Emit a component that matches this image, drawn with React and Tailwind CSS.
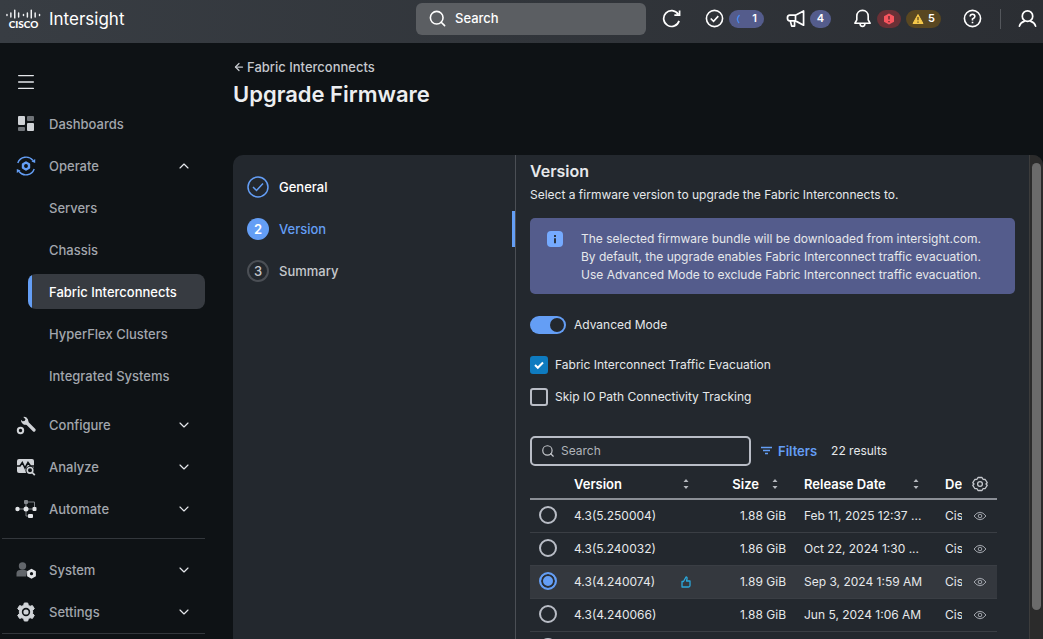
import React from 'react';
import { ArrowLeft, ChevronDown, ChevronUp, Menu, Search } from 'lucide-react';

const releases = [
  { version: '4.3(5.250004)', size: '1.88 GiB', date: 'Feb 11, 2025 12:37 ...' },
  { version: '4.3(5.240032)', size: '1.86 GiB', date: 'Oct 22, 2024 1:30 ...' },
  { version: '4.3(4.240074)', size: '1.89 GiB', date: 'Sep 3, 2024 1:59 AM', recommended: true },
  { version: '4.3(4.240066)', size: '1.88 GiB', date: 'Jun 5, 2024 1:06 AM' },
  { version: '4.3(4.240028)', size: '1.88 GiB', date: 'Apr 9, 2024 2:14 AM' },
];

const operateLinks = [
  'Servers',
  'Chassis',
  'Fabric Interconnects',
  'HyperFlex Clusters',
  'Integrated Systems',
];

const DashboardsIcon = () => (
  <svg viewBox="0 0 18 18" className="w-[18px] h-[18px]">
    <rect x="1" y="1" width="7" height="9" rx="1" fill="#d0d3d7" />
    <rect x="10" y="1" width="7" height="5" rx="1" fill="#6f7378" />
    <rect x="1" y="12" width="7" height="4" rx="1" fill="#6f7378" />
    <rect x="10" y="8" width="7" height="8" rx="1" fill="#d0d3d7" />
  </svg>
);

const OperateIcon = () => (
  <svg viewBox="0 0 20 20" className="w-5 h-5" fill="none" stroke="#649ef5">
    <path d="M1.800 7A8.800 8.800 0 0 1 17 4.500M18.200 13A8.800 8.800 0 0 1 3 15.500" strokeWidth="1.400" />
    <path d="M15.500 5.500 19.200 3v4zM4.500 14.500.8 17v-4z" fill="#649ef5" stroke="none" />
    <path d="M10 6.500 13 8.200v3.600L10 13.500 7 11.800V8.200z" strokeWidth="2.400" strokeLinejoin="round" />
  </svg>
);

const ConfigureIcon = () => (
  <svg viewBox="0 0 20 20" className="w-5 h-5" fill="none" stroke="#d0d3d7">
    <path d="M10.500 7.500 18 15" strokeWidth="3.200" strokeLinecap="round" />
    <path d="M7.300 1.900 9.500 4.200 8.600 6 6.500 6.200 4.900 4.800A4.600 4.600 0 0 0 11.500 9.300 4.600 4.600 0 0 0 7.300 1.900z" fill="#d0d3d7" stroke="none" />
    <circle cx="4.500" cy="15.500" r="2.700" strokeWidth="2" />
  </svg>
);

const AnalyzeIcon = () => (
  <svg viewBox="0 0 20 20" className="w-5 h-5" fill="none">
    <rect x="1" y="2" width="17" height="14" rx="2" fill="#d0d3d7" />
    <path d="M1 9h3l2.300-3.500L9 11l3-5.500L14.500 9H18" stroke="#0e1215" strokeWidth="1.600" />
    <circle cx="14" cy="13.500" r="4.600" fill="#0e1215" />
    <circle cx="14" cy="13.300" r="2.800" stroke="#d0d3d7" strokeWidth="1.600" />
    <path d="m16.200 15.500 2.600 2.700" stroke="#d0d3d7" strokeWidth="1.800" />
  </svg>
);

const AutomateIcon = () => (
  <svg viewBox="0 0 22 20" className="w-[22px] h-5" fill="#e3e5e8">
    <path d="M2 10h18M11 3h8.500v7M11 3v14h4" fill="none" stroke="#7d8186" />
    <circle cx="2.500" cy="10" r="2.200" />
    <circle cx="11" cy="10" r="2.500" />
    <rect x="17.500" y="8" width="4" height="4" rx="1" />
    <rect x="13" y="15" width="5" height="4" rx="1" />
    <rect x="9" y="1" width="4" height="4" rx="1" fill="#85898e" />
  </svg>
);

const SystemIcon = () => (
  <svg viewBox="0 0 20 20" className="w-5 h-5">
    <circle cx="6.500" cy="6" r="3.700" fill="#62666b" />
    <path d="M.5 16.500v-3q0-3.500 3.500-3.500h5l2.500 1-1.500 5.500z" fill="#62666b" />
    <path d="m15.500 8.700 4.400 2.500v5l-4.400 2.500-4.400-2.500v-5z" fill="#e3e5e8" />
    <circle cx="15.500" cy="13.700" r="1.600" fill="#0e1215" />
  </svg>
);

const SettingsIcon = () => (
  <svg viewBox="0 0 20 20" className="w-5 h-5">
    <path d="M8.300 1h3.400l.6 2.300 1.800 1 2.300-.7 1.900 3-1.700 1.800v3.200l1.700 1.800-1.900 3-2.300-.7-1.800 1-.6 2.300H8.300l-.6-2.300-1.800-1-2.300.7-1.900-3 1.700-1.800V8.400L1.700 6.600l1.900-3 2.300.7 1.800-1z" fill="#d0d3d7" stroke="#d0d3d7" strokeLinejoin="round" />
    <circle cx="10" cy="10" r="3.400" fill="none" stroke="#0e1215" strokeWidth="1.600" />
  </svg>
);

const Chevron = ({ open }) => {
  const Icon = open ? ChevronUp : ChevronDown;
  return <Icon className="w-4 h-4 text-gray-200" strokeWidth={1.75} />;
};

const MainItem = ({ icon, label, open, leaf }) => (
  <button type="button" aria-expanded={leaf ? undefined : Boolean(open)} className="flex w-full h-[42px] items-center pl-[15px] pr-[13px] text-left">
    <span className="flex w-[22px] justify-center">{icon}</span>
    <span className="flex-1 pl-3">{label}</span>
    {!leaf && <Chevron open={open} />}
  </button>
);

const Sidebar = () => (
  <nav className="w-[205px] shrink-0 pt-[18px] text-[13px] leading-5 font-medium text-[#a2a6ad]">
    <button type="button" aria-label="Toggle menu" className="ml-[15px] flex h-[42px] w-[22px] items-center justify-center text-gray-200">
      <Menu className="w-[22px] h-[22px]" strokeWidth={1.5} />
    </button>
    <MainItem icon={<DashboardsIcon />} label="Dashboards" leaf />
    <MainItem icon={<OperateIcon />} label="Operate" open />
    <ul className="flex flex-col gap-[7px] py-[3px] pl-7">
      {operateLinks.map((label) =>
        label === 'Fabric Interconnects' ? (
          <li key={label}>
            <a href="#fabric-interconnects" aria-current="page" className="flex h-[35px] items-center overflow-hidden rounded-lg bg-[#373b41] text-white">
              <span className="h-full w-1 bg-[#649ef5]" />
              <span className="pl-[17px]">{label}</span>
            </a>
          </li>
        ) : (
          <li key={label}>
            <a href="#operate" className="flex h-[35px] items-center pl-[21px]">{label}</a>
          </li>
        )
      )}
    </ul>
    <div className="pt-2">
      <MainItem icon={<ConfigureIcon />} label="Configure" />
      <MainItem icon={<AnalyzeIcon />} label="Analyze" />
      <MainItem icon={<AutomateIcon />} label="Automate" />
    </div>
    <div className="ml-[2px] mt-2 mb-[10px] border-t border-[#33373c]" />
    <MainItem icon={<SystemIcon />} label="System" />
    <MainItem icon={<SettingsIcon />} label="Settings" />
    <div className="ml-[2px] border-t border-[#33373c]" />
  </nav>
);

const CiscoLogo = () => (
  <span className="flex w-[35px] flex-col items-center">
    <svg viewBox="0 0 36 10" className="h-[10px] w-[35px]" stroke="#f1f2f4" strokeWidth="1.500" strokeLinecap="round">
      <path d="M1 5.500v1M5 4v4M9 1v8M13 4v4M18 5.500v1M22 4v4M26 1v8M30 4v4M34.500 5.500v1" />
    </svg>
    <span className="font-['Lato',sans-serif] text-[10px] leading-[10px] font-black">CISCO</span>
  </span>
);

const Header = () => (
  <header className="flex h-[43px] shrink-0 items-center bg-linear-to-r from-[#383d43] to-[#2b2e33] pb-[6px] pr-[6px] text-white">
    <a href="#home" className="flex w-[416px] shrink-0 items-center gap-2 pl-1.5">
      <CiscoLogo />
      <span className="text-[17px] leading-6">Intersight</span>
    </a>
    <label className="flex h-8 min-w-0 flex-1 items-center gap-2 rounded-md bg-[#5b5e62] px-3">
      <Search className="h-[19px] w-[19px] shrink-0" strokeWidth={2} />
      <input type="search" aria-label="Search Intersight" placeholder="Search" className="w-full min-w-0 bg-transparent text-[13px] font-medium outline-none placeholder:text-white" />
    </label>
    <div className="ml-4 flex shrink-0 items-center">
      <button type="button" aria-label="Refresh">
        <svg viewBox="0 0 20 20" className="h-[19px] w-[19px]" fill="none" stroke="currentColor" strokeWidth="1.800">
          <path d="M18 12.500A8.300 8.300 0 1 1 17 5.500M18.500 1.500v5h-5.500" />
        </svg>
      </button>
      <button type="button" aria-label="Requests" className="ml-6 flex items-center gap-[5px]">
        <svg viewBox="0 0 20 20" className="h-[19px] w-[19px]" fill="none" stroke="currentColor" strokeWidth="1.700">
          <circle cx="10" cy="10" r="8.500" />
          <path d="m6 10 3 3 5-5.500" />
        </svg>
        <span className="flex h-[18px] w-[35px] items-center justify-between rounded-full bg-[#545c8c] px-[7px] text-[11px] font-semibold">
          <svg viewBox="0 0 6 10" className="h-[10px] w-[6px]" fill="none" stroke="#4a8af0" strokeWidth="1.300">
            <path d="M3.500 1Q-.5 5 3 9" />
          </svg>
          1
        </span>
      </button>
      <button type="button" aria-label="Announcements" className="ml-[22px] flex items-center gap-[5px]">
        <svg viewBox="0 0 20 20" className="h-[19px] w-[19px]" fill="none" stroke="currentColor" strokeWidth="1.800" strokeLinejoin="round">
          <path d="M18.500 2v15L10 12.500H4Q1.500 12.500 1.500 9.500T4 6.500h6zM10 6.500v6M4.500 12.500 6 18h3v-5.500" />
        </svg>
        <span className="flex h-[18px] w-[21px] items-center justify-center rounded-full bg-[#545c8c] text-[11px] font-semibold">4</span>
      </button>
      <button type="button" aria-label="Alarms" className="ml-[22px] flex items-center gap-[5px]">
        <svg viewBox="0 0 20 20" className="h-[19px] w-[19px]" fill="none" stroke="currentColor" strokeWidth="1.700" strokeLinejoin="round">
          <path d="M10 1.500c3.500 0 6 2.500 6 6v4l2 3.500H2l2-3.500v-4c0-3.500 2.500-6 6-6zM7.500 15.500a2.500 2.800 0 0 0 5 0" />
        </svg>
        <span className="flex h-[18px] w-[24px] items-center justify-center rounded-full bg-[#6a3036]">
          <svg viewBox="0 0 12 12" className="h-3 w-3">
            <path d="m6 .5 5 2.800v5.400l-5 2.800-5-2.800V3.300z" fill="#f8555e" />
            <path d="M6 3v3.500M6 8v1.300" stroke="#5a2328" strokeWidth="1.300" />
          </svg>
        </span>
        <span className="flex h-[18px] w-[35px] items-center justify-between rounded-full bg-[#594721] px-1.5 text-[11px] font-semibold">
          <svg viewBox="0 0 12 12" className="h-3 w-3">
            <path d="m6 1.500 5 9H1z" fill="#f5c84a" stroke="#f5c84a" strokeLinejoin="round" />
            <path d="M6 4v3.300M6 8.500v1.200" stroke="#594721" strokeWidth="1.300" />
          </svg>
          5
        </span>
      </button>
      <button type="button" aria-label="Help" className="ml-[22px]">
        <svg viewBox="0 0 20 20" className="h-[19px] w-[19px]" fill="none" stroke="currentColor" strokeWidth="1.700">
          <circle cx="10" cy="10" r="8.500" />
          <path d="M7.500 8Q7.500 5.500 10 5.500T12.500 8Q12.500 9.500 10 10.500V12M10 13.300v1.700" />
        </svg>
      </button>
      <span className="ml-[18px] mr-[17px] h-5 w-px bg-[#54575c]" />
      <button type="button" aria-label="Account">
        <svg viewBox="0 0 20 20" className="h-[19px] w-[19px]" fill="none" stroke="currentColor" strokeWidth="1.800" strokeLinecap="round">
          <circle cx="10" cy="7.500" r="5.500" />
          <path d="M1.500 18q1-4 5-5M18.500 18q-1-4-5-5" />
        </svg>
      </button>
    </div>
  </header>
);

const Steps = () => (
  <ol className="w-[283px] shrink-0 border-r border-[#4b4f55] pt-[11px] text-[13px] leading-5 font-medium">
    <li className="flex h-[42px] items-center">
      <button type="button" className="flex h-9 w-full items-center gap-[10px] pl-[14px] text-white">
        <svg viewBox="0 0 22 22" className="h-[22px] w-[22px]" fill="none" stroke="#649ef5" strokeWidth="1.500">
          <circle cx="11" cy="11" r="10" />
          <path d="m6 11 3.500 3.500L16 7.500" />
        </svg>
        General
      </button>
    </li>
    <li className="flex h-[42px] items-center">
      <button type="button" aria-current="step" className="flex h-9 w-full items-center gap-[10px] border-r-[3px] border-[#649ef5] pl-[14px] text-[#649ef5]">
        <span className="flex h-[22px] w-[22px] items-center justify-center rounded-full bg-[#649ef5] font-semibold text-white">2</span>
        Version
      </button>
    </li>
    <li className="flex h-[42px] items-center">
      <button type="button" className="flex h-9 w-full items-center gap-[10px] pl-[14px] text-[#c5c8cd]">
        <span className="flex h-[22px] w-[22px] items-center justify-center rounded-full border-2 border-[#4b4f55]">3</span>
        Summary
      </button>
    </li>
  </ol>
);

const SortIcon = () => (
  <svg viewBox="0 0 8 12" className="h-3 w-2 shrink-0" fill="#b4b8be">
    <path d="M4 1 6.500 4h-5zM4 11 6.500 8h-5z" />
  </svg>
);

const EyeIcon = () => (
  <svg viewBox="0 0 14 10" className="h-[10px] w-[14px]" fill="none" stroke="#a2a6ad" strokeWidth="1">
    <path d="M1 5Q7-2.500 13 5 7 12.500 1 5z" />
    <circle cx="7" cy="5" r="1.800" />
  </svg>
);

const CheckOption = ({ label, defaultChecked }) => (
  <label className="flex items-center gap-[7px]">
    <span className="grid h-[18px] w-[18px] place-items-center">
      <input type="checkbox" defaultChecked={defaultChecked} className="peer col-start-1 row-start-1 h-[18px] w-[18px] appearance-none rounded-[3px] border-2 border-[#b9bdc6] checked:border-[#0e7bc0] checked:bg-[#0e7bc0]" />
      <svg viewBox="0 0 10 10" className="pointer-events-none invisible col-start-1 row-start-1 h-[10px] w-[10px] peer-checked:visible" fill="none" stroke="white" strokeWidth="2">
        <path d="m1 5 2.800 2.800L9 2.500" />
      </svg>
    </span>
    <span className="leading-[18px]">{label}</span>
  </label>
);

const VersionTable = () => (
  <table className="w-full table-fixed border-collapse text-left">
    <colgroup>
      <col className="w-9" />
      <col className="w-[130px]" />
      <col className="w-[100px]" />
      <col />
      <col className="w-[25px]" />
      <col className="w-[35px]" />
    </colgroup>
    <thead className="border-b-2 border-[#8b8f96] text-[13px] text-white">
      <tr className="h-[33px]">
        <th aria-label="Select" />
        <th className="pt-[3px] pl-2 pr-[6px] font-semibold">
          <span className="flex items-center justify-between">Version <SortIcon /></span>
        </th>
        <th className="pt-[3px] pr-[17px] font-semibold">
          <span className="flex items-center justify-end gap-3">Size <SortIcon /></span>
        </th>
        <th className="pt-[3px] pl-2 pr-[17px] font-semibold">
          <span className="flex items-center justify-between">Release Date <SortIcon /></span>
        </th>
        <th className="overflow-hidden pt-[3px] pl-2 font-semibold whitespace-nowrap">Description</th>
        <th className="pt-[3px]">
          <button type="button" aria-label="Table settings" className="flex w-full justify-center">
            <svg viewBox="0 0 16 16" className="h-4 w-4" fill="none" stroke="#c5c8cd" strokeWidth="1.300" strokeLinejoin="round">
              <path d="M6 1.500h4l1 1.800 2.200.2 2 3.200L14 8l1.200 1.300-2 3.200-2.200.2-1 1.800H6l-1-1.800-2.200-.2-2-3.200L2 8 .8 6.700l2-3.200L5 3.300z" />
              <circle cx="8" cy="8" r="2.400" />
            </svg>
          </button>
        </th>
      </tr>
    </thead>
    <tbody>
      {releases.map((item) => (
        <tr key={item.version} className={item.recommended ? 'h-[33px] border-b border-[#3a3e44] bg-[#34383e]' : 'h-[33px] border-b border-[#3a3e44]'}>
          <td className="pb-[2px]">
            <input
              type="radio"
              name="firmware"
              aria-label={item.version}
              defaultChecked={item.recommended}
              className="mx-auto block h-[18px] w-[18px] appearance-none rounded-full border-2 border-[#b9bdc6] checked:border-[#649ef5] checked:bg-[#649ef5] checked:shadow-[inset_0_0_0_2px_#292e35]"
            />
          </td>
          <td className="pl-2 pr-[5px]">
            <span className="flex items-center justify-between">
              {item.version}
              {item.recommended && (
                <svg viewBox="0 0 10 12" className="h-3 w-[10px]" fill="none" stroke="#2ba8dc" strokeWidth="1.300" strokeLinejoin="round">
                  <path d="M1 5.500h1.500L5 1q1.500 0 1 2L5.500 5H9v4.500q0 1.500-1.500 1.500H1z" />
                </svg>
              )}
            </span>
          </td>
          <td className="pr-[10px] text-right">{item.size}</td>
          <td className="overflow-hidden pl-2 whitespace-nowrap">{item.date}</td>
          <td className="overflow-hidden pl-2 whitespace-nowrap">Cisco</td>
          <td>
            <button type="button" aria-label="View details" className="flex w-full justify-center">
              <EyeIcon />
            </button>
          </td>
        </tr>
      ))}
    </tbody>
  </table>
);

const VersionForm = () => (
  <section className="min-w-0 flex-1 overflow-hidden px-[14px] pt-1 text-xs leading-5 text-[#e6e8eb]">
    <h2 className="text-base leading-6 font-semibold">Version</h2>
    <p className="mt-[2px]">Select a firmware version to upgrade the Fabric Interconnects to.</p>

    <div className="mt-[13px] flex rounded-[5px] bg-[#545c8c] pt-3 pb-[10px] pl-[17px]">
      <svg viewBox="0 0 16 16" className="mt-px h-4 w-4 shrink-0">
        <rect width="16" height="16" rx="4" fill="#75aaff" />
        <path d="M8 4v2M8 7.200v5" stroke="#23282e" strokeWidth="1.800" />
      </svg>
      <p className="pl-[18px] leading-[18px]">
        The selected firmware bundle will be downloaded from intersight.com.<br />
        By default, the upgrade enables Fabric Interconnect traffic evacuation.<br />
        Use Advanced Mode to exclude Fabric Interconnect traffic evacuation.
      </p>
    </div>

    <label className="mt-[22px] flex items-center gap-2">
      <input
        type="checkbox"
        role="switch"
        defaultChecked
        className="flex h-[18px] w-9 appearance-none items-center rounded-full bg-[#5b5e62] px-[2px] before:h-[14px] before:w-[14px] before:rounded-full before:bg-[#23282e] checked:justify-end checked:bg-[#649ef5]"
      />
      <span className="leading-[18px]">Advanced Mode</span>
    </label>

    <div className="mt-[22px] flex flex-col gap-[14px]">
      <CheckOption label="Fabric Interconnect Traffic Evacuation" defaultChecked />
      <CheckOption label="Skip IO Path Connectivity Tracking" />
    </div>

    <div className="mt-[30px] flex items-center">
      <label className="flex h-[30px] w-[221px] items-center gap-1.5 rounded-[5px] border-2 border-[#b9bdc6] px-[9px]">
        <Search className="h-[14px] w-[14px] shrink-0 text-[#c5c8cd]" />
        <input type="search" aria-label="Search versions" placeholder="Search" className="w-full min-w-0 bg-transparent outline-none placeholder:text-[#b0b4ba]" />
      </label>
      <button type="button" className="ml-[10px] flex items-center gap-1.5 text-[13px] font-semibold text-[#649ef5]">
        <svg viewBox="0 0 11 10" className="h-[10px] w-[11px]" stroke="currentColor" strokeWidth="1.300">
          <path d="M0 1.500h11M2 4.500h7M4 7.500h3" />
        </svg>
        Filters
      </button>
      <span className="ml-[14px]">22 results</span>
    </div>

    <div className="mr-[18px]">
      <VersionTable />
    </div>
  </section>
);

const App = () => {
  return (
    <div className="flex h-screen flex-col overflow-hidden bg-[#0e1215] font-['Inter',sans-serif]">
      <Header />
      <div className="flex min-h-0 flex-1 gap-7">
        <Sidebar />
        <main className="flex min-w-0 flex-1 flex-col pt-[14px]">
          <a href="#fabric-interconnects" className="flex items-center gap-[2px] text-[13px] leading-5 font-medium text-[#c5c8cd]">
            <ArrowLeft className="h-3 w-3" strokeWidth={2.5} />
            Fabric Interconnects
          </a>
          <h1 className="mt-px text-[22px] leading-8 font-semibold text-[#eceef0]">Upgrade Firmware</h1>

          <div className="mt-[45px] flex min-h-0 flex-1 overflow-hidden rounded-t-[10px] bg-[#23282e]">
            <Steps />
            <VersionForm />
            {/* Scroll track */}
            <div className="w-[14px] shrink-0 border-l border-[#3c3c3c] bg-[#2b2b2b] px-[2px] pt-2">
              <div className="h-[94%] rounded-full bg-[#6b6b6b]" />
            </div>
          </div>
        </main>
      </div>
    </div>
  );
};

export default App;
